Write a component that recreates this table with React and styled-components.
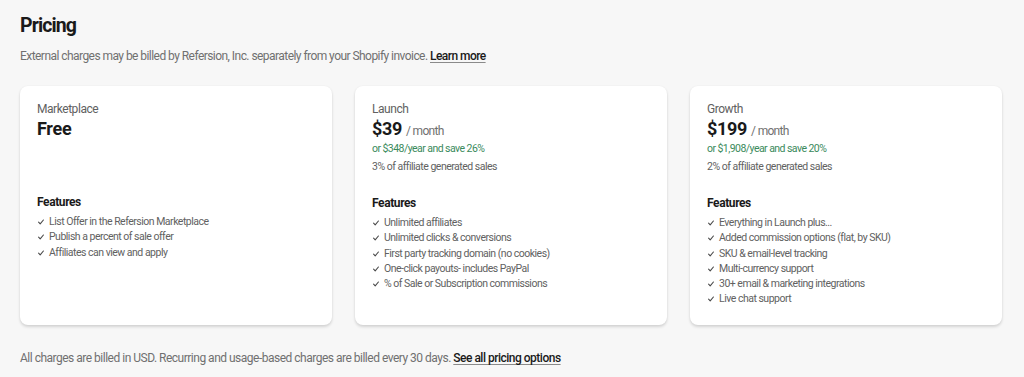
import React from "react";
import styled, { createGlobalStyle } from "styled-components";

const Global = createGlobalStyle`
  html, body { margin: 0; padding: 0; background: #f7f7f7; }
  body { font-family: Roboto, "Liberation Sans", sans-serif; color: #303030; -webkit-font-smoothing: antialiased; }
`;

const Page = styled.div`
  padding: 14px 22px 0 20px;
  display: flex;
  flex-direction: column;
`;

const Title = styled.h1`
  margin: 0;
  font-size: 19.5px;
  line-height: 24px;
  font-weight: 700;
  letter-spacing: -0.9px;
  color: #1a1a1a;
`;

const Note = styled.p`
  margin: ${(p) => p.$mt || "5px"} 0 0;
  font-size: 12px;
  line-height: 16px;
  letter-spacing: ${(p) => p.$ls || "-0.55px"};
  color: #707070;
`;

const Link = styled.a`
  color: #1a1a1a;
  font-weight: 500;
  text-decoration: underline;
  text-decoration-color: #8a8a8a;
  text-underline-offset: 2px;
`;

const Cards = styled.div`
  margin-top: 22px;
  display: grid;
  grid-template-columns: repeat(3, 312px);
  column-gap: 23px;
`;

const Card = styled.div`
  background: #fff;
  border-radius: 8px;
  box-shadow: 0 2px 3px rgba(0, 0, 0, 0.14), 0 0 2px rgba(0, 0, 0, 0.05);
  padding: 15px 17px 18px;
  height: 239px;
  box-sizing: border-box;
`;

const Head = styled.div`
  min-height: 72px;
  display: flex;
  flex-direction: column;
`;

const PlanName = styled.div`
  font-size: 12px;
  line-height: 16px;
  letter-spacing: -0.45px;
  color: #616161;
`;

const PriceRow = styled.div`
  margin-top: 1px;
  display: flex;
  align-items: baseline;
  gap: 4px;
  line-height: 22px;
`;

const Price = styled.span`
  font-size: 18px;
  font-weight: 700;
  letter-spacing: -0.3px;
  color: #1a1a1a;
`;

const Per = styled.span`
  font-size: 12px;
  letter-spacing: -0.7px;
  color: #707070;
`;

const Save = styled.div`
  margin-top: 0;
  font-size: 10.5px;
  line-height: 14px;
  letter-spacing: -0.55px;
  color: #3a8a5c;
`;

const Commission = styled.div`
  margin-top: 4px;
  font-size: 10.5px;
  line-height: 14px;
  letter-spacing: -0.5px;
  color: #616161;
`;

const FeaturesTitle = styled.div`
  margin-top: 20px;
  font-size: 12px;
  line-height: 18px;
  font-weight: 700;
  letter-spacing: -0.4px;
  color: #1a1a1a;
`;

const List = styled.ul`
  list-style: none;
  margin: 3px 0 0;
  padding: 0;
`;

const Item = styled.li`
  display: block;
  height: 15.3px;
  font-size: 10.5px;
  line-height: 15.3px;
  letter-spacing: -0.5px;
  color: #616161;
  white-space: nowrap;
`;

const CheckIcon = styled.svg`
  display: inline-block;
  width: 6px;
  height: 6px;
  margin: 0 5px 0 1px;
  vertical-align: 0px;
`;

const Check = () => (
  <CheckIcon viewBox="0 0 6 6">
    <path d="M0.6 3.2 L2.2 4.8 L5.4 1" fill="none" stroke="#4a4a4a" strokeWidth="1.1" strokeLinecap="round" strokeLinejoin="round" />
  </CheckIcon>
);

const plans = [
  {
    name: "Marketplace",
    price: "Free",
    features: [
      "List Offer in the Refersion Marketplace",
      "Publish a percent of sale offer",
      "Affiliates can view and apply",
    ],
  },
  {
    name: "Launch",
    price: "$39",
    per: "/ month",
    save: "or $348/year and save 26%",
    commission: "3% of affiliate generated sales",
    features: [
      "Unlimited affiliates",
      "Unlimited clicks & conversions",
      "First party tracking domain (no cookies)",
      "One-click payouts- includes PayPal",
      "% of Sale or Subscription commissions",
    ],
  },
  {
    name: "Growth",
    price: "$199",
    per: "/ month",
    save: "or $1,908/year and save 20%",
    commission: "2% of affiliate generated sales",
    features: [
      "Everything in Launch plus...",
      "Added commission options (flat, by SKU)",
      "SKU & email-level tracking",
      "Multi-currency support",
      "30+ email & marketing integrations",
      "Live chat support",
    ],
  },
];

export default function App() {
  return (
    <>
      <Global />
      <Page>
        <Title>Pricing</Title>
        <Note $mt="10px">
          External charges may be billed by Refersion, Inc. separately from your Shopify invoice.{" "}
          <Link>Learn more</Link>
        </Note>
        <Cards>
          {plans.map((p) => (
            <Card key={p.name}>
              <Head>
                <PlanName>{p.name}</PlanName>
                <PriceRow>
                  <Price>{p.price}</Price>
                  {p.per && <Per>{p.per}</Per>}
                </PriceRow>
                {p.save && <Save>{p.save}</Save>}
                {p.commission && <Commission>{p.commission}</Commission>}
              </Head>
              <FeaturesTitle>Features</FeaturesTitle>
              <List>
                {p.features.map((f) => (
                  <Item key={f}>
                    <Check />
                    {f}
                  </Item>
                ))}
              </List>
            </Card>
          ))}
        </Cards>
        <Note $mt="25px" $ls="-0.5px">
          All charges are billed in USD. Recurring and usage-based charges are billed every 30 days.{" "}
          <Link>See all pricing options</Link>
        </Note>
      </Page>
    </>
  );
}
